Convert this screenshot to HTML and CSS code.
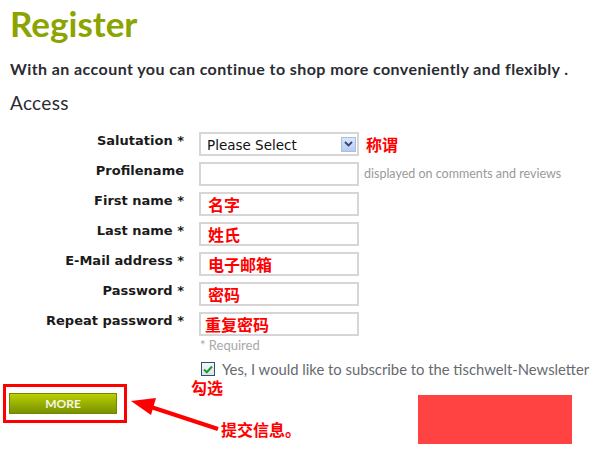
FILE: index.html
```html
<!DOCTYPE html>
<html>
<head>
<meta charset="utf-8">
<link rel="stylesheet" href="styles.css">
</head>
<body>
<div class="page">
  <h1 class="title">Register</h1>
  <p class="lead">With an account you can continue to shop more conveniently and flexibly .</p>
  <h2 class="section">Access</h2>

  <div class="form">
    <label class="label">Salutation *</label>
    <div class="select">
      <span class="select-text">Please Select</span>
      <span class="select-btn">
        <svg width="9" height="6" viewBox="0 0 9 6"><path d="M1 1 L4.5 4.5 L8 1" fill="none" stroke="#34466e" stroke-width="1.8"/></svg>
      </span>
    </div>
    <span class="note">称谓</span>

    <label class="label">Profilename</label>
    <input class="input" type="text" value="">
    <span class="hint">displayed on comments and reviews</span>

    <label class="label">First name *</label>
    <input class="input" type="text" value="名字">
    <span></span>

    <label class="label">Last name *</label>
    <input class="input" type="text" value="姓氏">
    <span></span>

    <label class="label">E-Mail address *</label>
    <input class="input" type="text" value="电子邮箱">
    <span></span>

    <label class="label">Password *</label>
    <input class="input" type="text" value="密码">
    <span></span>

    <label class="label">Repeat password *</label>
    <input class="input tight" type="text" value="重复密码">
    <span></span>
  </div>

  <div class="required">* Required</div>

  <div class="check-row">
    <span class="checkbox">
      <svg width="10" height="9" viewBox="0 0 10 9"><path d="M1 4.5 L3.8 7.2 L9 1.5" fill="none" stroke="#1f9a2a" stroke-width="2"/></svg>
    </span>
    <span class="check-text">Yes, I would like to subscribe to the tischwelt-Newsletter</span>
  </div>

  <div class="submit-wrap">
    <button class="submit">MORE</button>
  </div>
</div>

<span class="anno anno-check">勾选</span>
<span class="anno anno-submit">提交信息。</span>
<svg class="arrow" width="600" height="450" viewBox="0 0 600 450">
  <line x1="218" y1="429" x2="148" y2="406" stroke="#ff0000" stroke-width="4"/>
  <polygon points="131,401 156,398 151,415" fill="#ff0000"/>
</svg>
<div class="redact"></div>
</body>
</html>
```

FILE: styles.css
```css
html, body {
  margin: 0;
  padding: 0;
  background: #ffffff;
}

body {
  width: 600px;
  height: 450px;
  overflow: hidden;
  position: relative;
  font-family: Lato, "Open Sans", sans-serif;
}

.page {
  padding: 0 10px;
}

.title {
  margin: 3px 0 0;
  font: 700 35px/40px Lato, sans-serif;
  color: #8ba400;
}

.lead {
  margin: 16px 0 0;
  font: 700 16px/20px Lato, sans-serif;
  letter-spacing: 0.42px;
  color: #2b2b33;
  white-space: nowrap;
}

.section {
  margin: 13px 0 0;
  font: 400 19px/22px Lato, sans-serif;
  letter-spacing: 0.3px;
  color: #2b2b33;
}

.form {
  margin-top: 18px;
  display: grid;
  grid-template-columns: 174px 160px auto;
  column-gap: 15px;
  row-gap: 6px;
  align-items: start;
}

.form > :nth-child(3n) {
  margin-left: -10px;
  align-self: center;
}

.label {
  text-align: right;
  font: 700 13px/16px "DejaVu Sans", sans-serif;
  color: #1b1b1b;
  padding-top: 1px;
}

.select,
.input {
  box-sizing: border-box;
  width: 160px;
  height: 24px;
  border: 2px solid #d6d6d6;
  background: #fff;
  margin: 0;
}

.select {
  display: flex;
  align-items: center;
  justify-content: space-between;
  padding: 0 1px 0 6px;
}

.select-text {
  font: 13.5px/16px "DejaVu Sans", sans-serif;
  color: #111;
  padding-top: 2px;
}

.select-btn {
  width: 15px;
  height: 15px;
  box-sizing: border-box;
  border: 1px solid #a9bde6;
  background: linear-gradient(#dbe6fb, #b8cbf1);
  display: flex;
  align-items: center;
  justify-content: center;
}

.input {
  padding: 0 0 0 7px;
  font: 700 16px/20px "Noto Sans CJK SC", sans-serif;
  color: #ff0000;
  outline: none;
}

.input.tight {
  padding-left: 4px;
}

.note {
  font: 700 16px/20px "Noto Sans CJK SC", sans-serif;
  color: #ff0000;
  padding-left: 2px;
}

.hint {
  font: 400 12.5px/16px Lato, sans-serif;
  color: #9a9a9a;
  padding-left: 0;
}

.required {
  margin-top: 1px;
  padding-left: 190px;
  font: 400 13px/16px Lato, sans-serif;
  color: #a8a8a8;
}

.check-row {
  margin-top: 8px;
  padding-left: 191px;
  display: flex;
  align-items: center;
  height: 16px;
}

.checkbox {
  box-sizing: border-box;
  width: 14px;
  height: 14px;
  border: 1px solid #2c4f7a;
  background: linear-gradient(#f4f6f8, #dfe4ea);
  display: flex;
  align-items: center;
  justify-content: center;
  margin-right: 7px;
}

.check-text {
  font: 400 14.8px/16px Lato, sans-serif;
  color: #666a70;
  white-space: nowrap;
}

.submit-wrap {
  margin: 7px 0 0 -7px;
  width: 108px;
  border: 3px solid #ff0000;
  padding: 6px 7px 6px 3px;
}

.submit {
  display: block;
  width: 108px;
  height: 21px;
  border: 1px solid #718700;
  background: linear-gradient(#bccf00, #98b000 50%, #7a9200);
  font: 700 12px/19px Lato, sans-serif;
  color: #f4f6e6;
  padding: 0;
  margin: 0;
}

.anno {
  position: absolute;
  font: 700 16px/20px "Noto Sans CJK SC", sans-serif;
  color: #ff0000;
}

.anno-check {
  left: 191px;
  top: 377px;
}

.anno-submit {
  left: 221px;
  top: 419px;
}

.arrow {
  position: absolute;
  left: 0;
  top: 0;
  pointer-events: none;
}

.redact {
  position: absolute;
  left: 418px;
  top: 395px;
  width: 154px;
  height: 49px;
  background: #ff4343;
}
```
